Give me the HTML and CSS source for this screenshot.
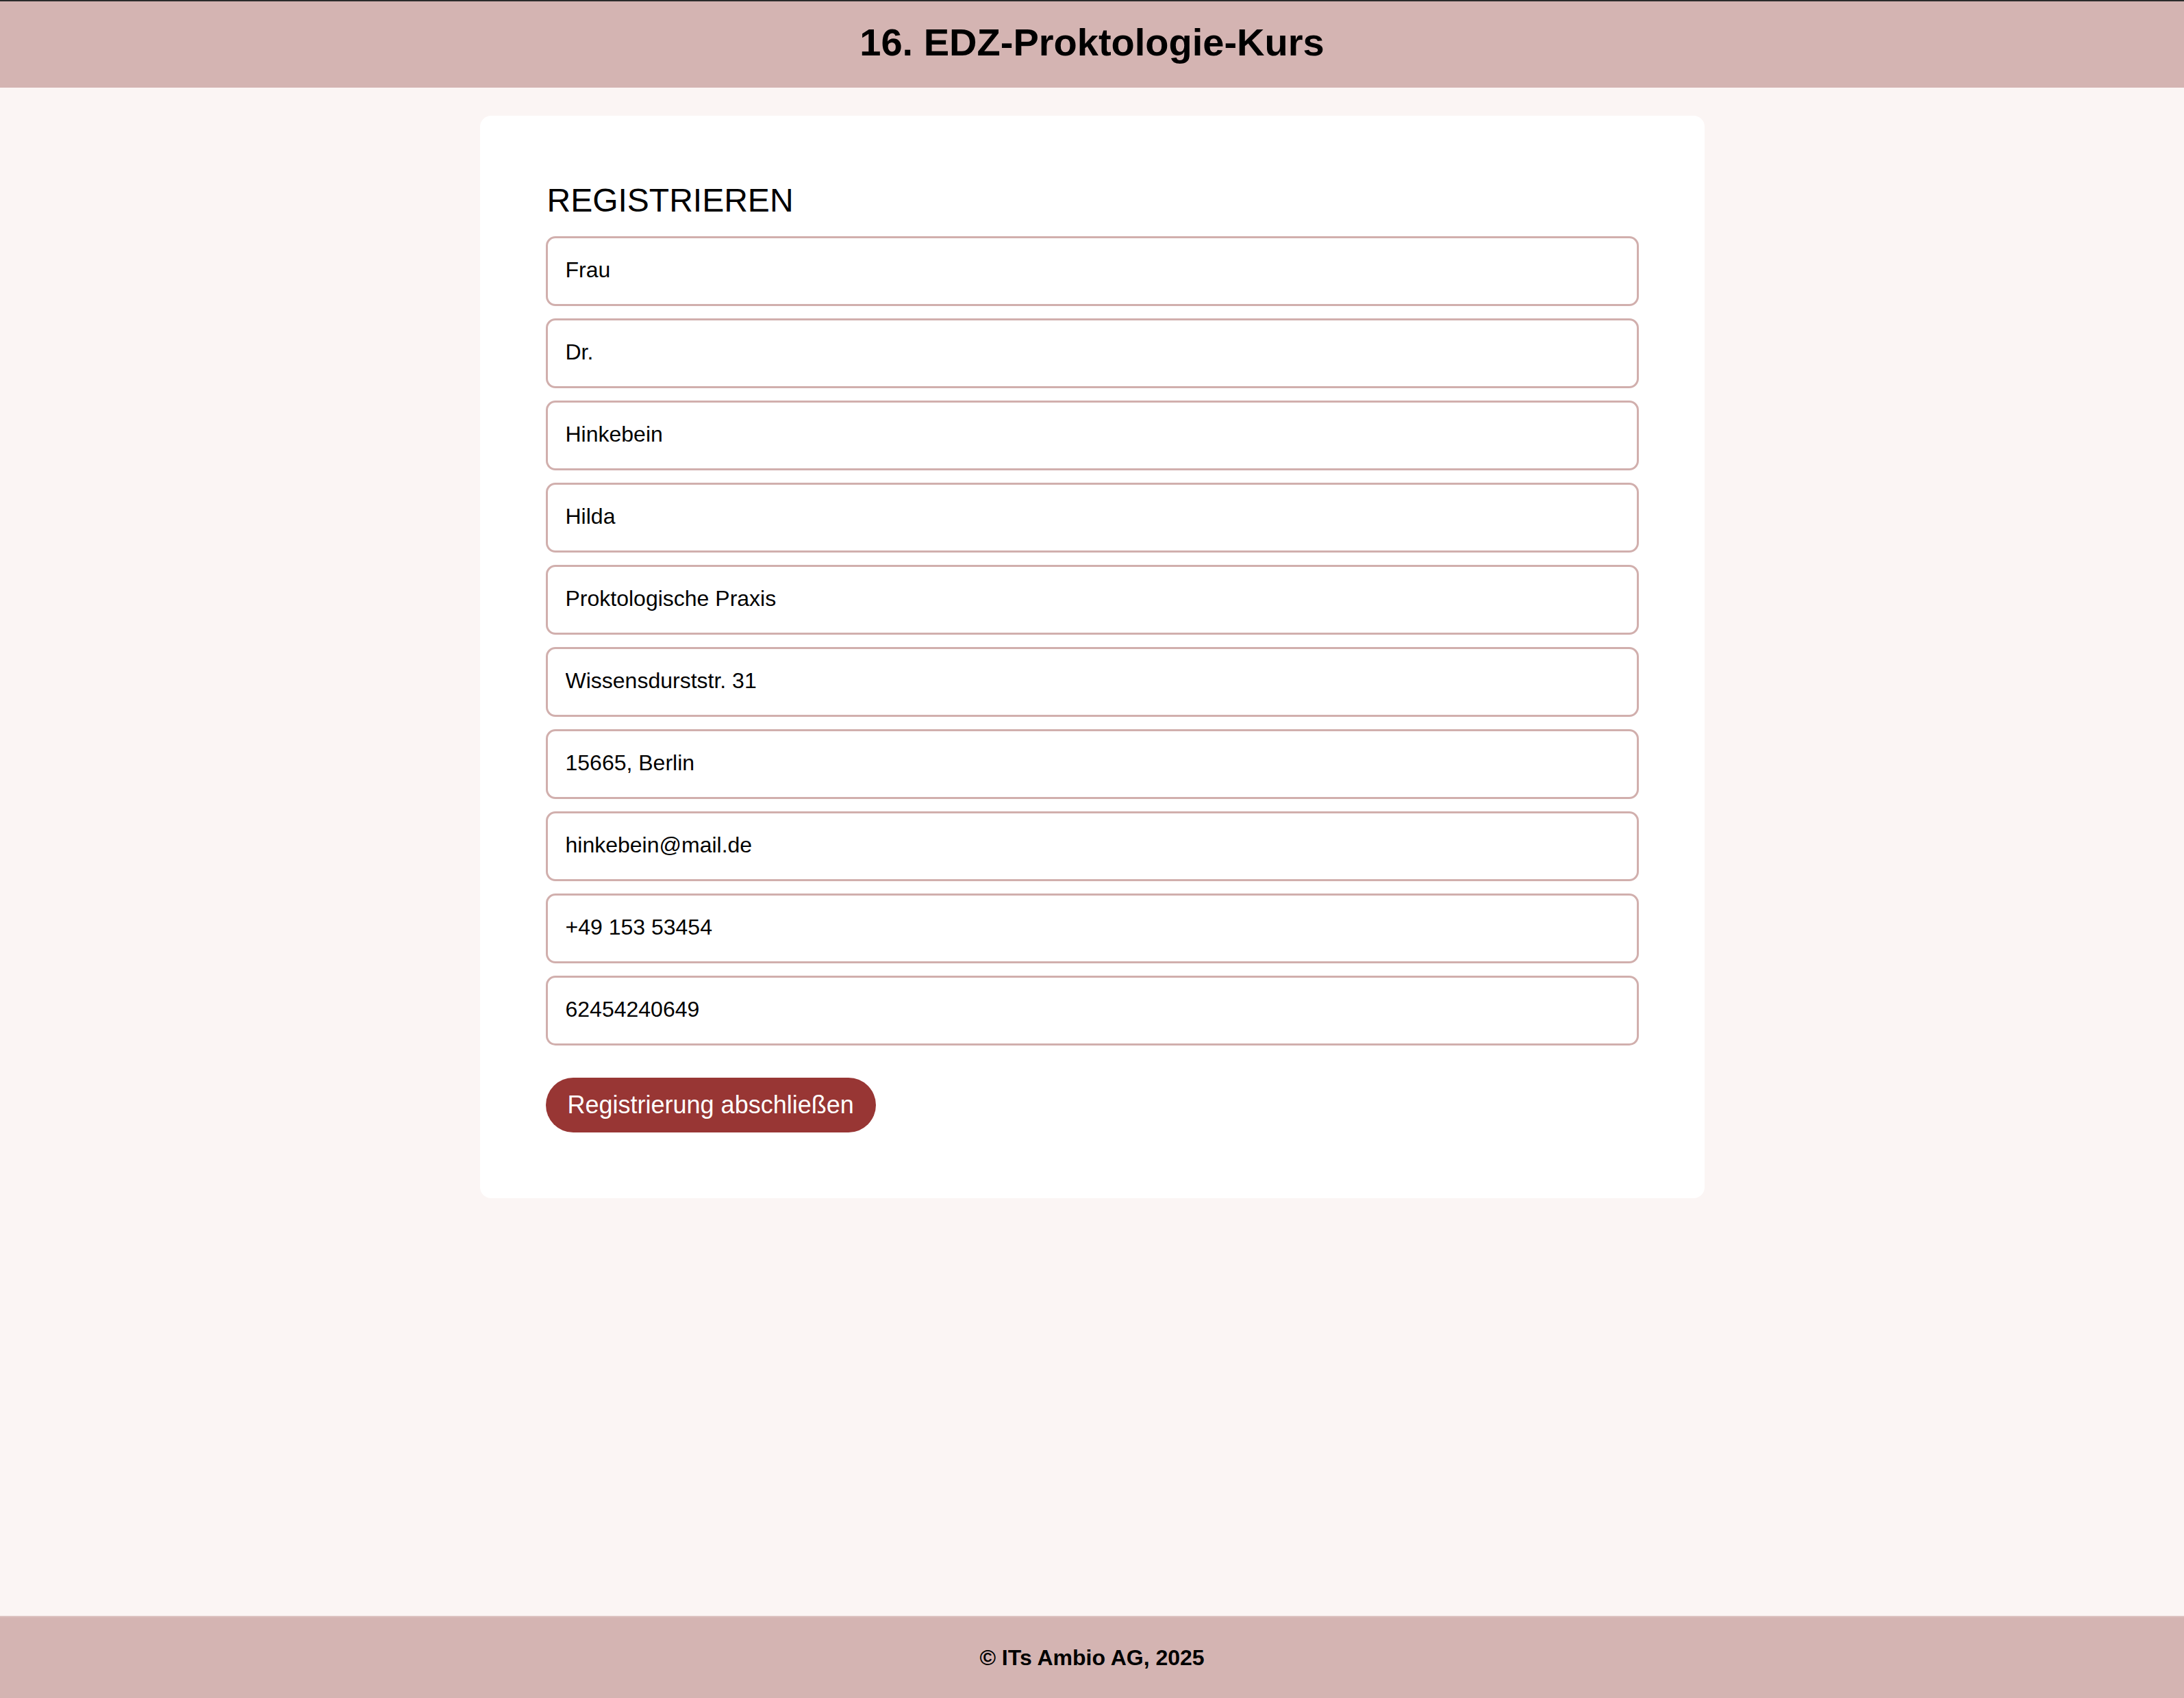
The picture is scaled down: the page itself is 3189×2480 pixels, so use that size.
FILE: index.html
```html
<!DOCTYPE html>
<html lang="de">
<head>
<meta charset="utf-8">
<title>16. EDZ-Proktologie-Kurs</title>
<link rel="stylesheet" href="styles.css">
</head>
<body>
<header class="site-header">
  <h1 class="site-title">16. EDZ-Proktologie-Kurs</h1>
</header>
<main class="main">
  <section class="card">
    <h2 class="card-title">REGISTRIEREN</h2>
    <form class="form">
      <input class="field" type="text" value="Frau" readonly>
      <input class="field" type="text" value="Dr." readonly>
      <input class="field" type="text" value="Hinkebein" readonly>
      <input class="field" type="text" value="Hilda" readonly>
      <input class="field" type="text" value="Proktologische Praxis" readonly>
      <input class="field" type="text" value="Wissensdurststr. 31" readonly>
      <input class="field" type="text" value="15665, Berlin" readonly>
      <input class="field" type="text" value="hinkebein@mail.de" readonly>
      <input class="field" type="text" value="+49 153 53454" readonly>
      <input class="field" type="text" value="62454240649" readonly>
      <button class="submit" type="button">Registrierung abschließen</button>
    </form>
  </section>
</main>
<footer class="site-footer">
  <p class="copyright">© ITs Ambio AG, 2025</p>
</footer>
</body>
</html>
```

FILE: styles.css
```css
* {
  box-sizing: border-box;
}

html, body {
  margin: 0;
  padding: 0;
}

body {
  min-height: 100vh;
  display: flex;
  flex-direction: column;
  background: #fbf5f4;
  font-family: "Liberation Sans", Arial, Helvetica, sans-serif;
  color: #000;
}

.site-header {
  height: 128px;
  border-top: 2px solid #2b2b2b;
  padding-bottom: 6px;
  background: #d4b4b2;
  display: flex;
  align-items: center;
  justify-content: center;
}

.site-title {
  margin: 0;
  font-size: 56px;
  font-weight: 700;
  line-height: 1.15;
}

.main {
  flex: 1;
  display: flex;
  justify-content: center;
  align-items: flex-start;
  padding-top: 41px;
}

.card {
  width: 1788px;
  background: #ffffff;
  border-radius: 16px;
  padding: 96px;
}

.card-title {
  margin: 0 0 25px;
  padding-left: 2px;
  font-size: 48px;
  font-weight: 400;
  line-height: 55px;
}

.form {
  display: flex;
  flex-direction: column;
  align-items: flex-start;
  gap: 18px;
}

.field {
  width: 100%;
  height: 102px;
  margin: 0;
  padding: 0 26px 3px;
  border: 3.5px solid #d1afad;
  border-radius: 14px;
  background: #ffffff;
  font-family: "Liberation Sans", Arial, Helvetica, sans-serif;
  font-size: 32px;
  color: #000;
  outline: none;
}

.submit {
  margin-top: 29px;
  height: 80px;
  padding: 0 32px;
  border: none;
  border-radius: 40px;
  background: #983634;
  color: #ffffff;
  font-family: "Liberation Sans", Arial, Helvetica, sans-serif;
  font-size: 36px;
  cursor: pointer;
}

.site-footer {
  height: 120px;
  border-top: 2px solid #dcc3c1;
  background: #d4b4b2;
  display: flex;
  align-items: center;
  justify-content: center;
}

.copyright {
  margin: 0;
  font-size: 32px;
  font-weight: 700;
}
```
